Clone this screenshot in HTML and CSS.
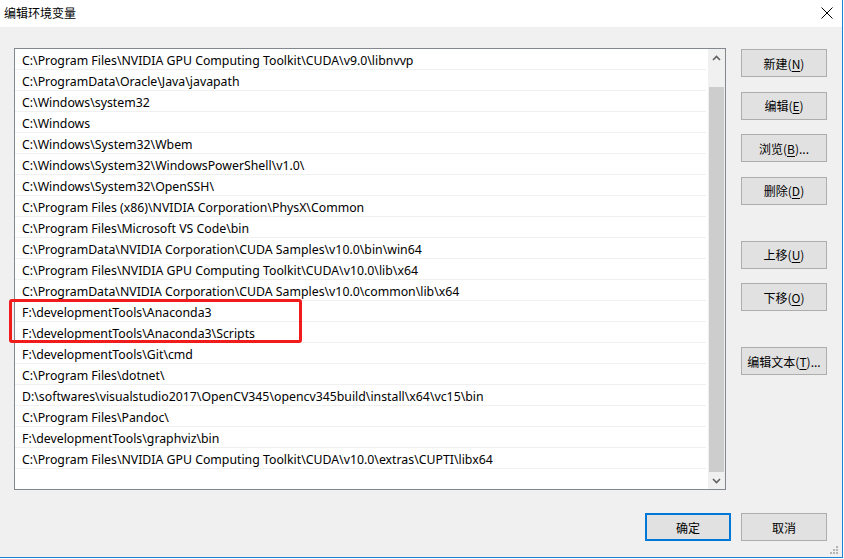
FILE: index.html
```html
<!DOCTYPE html>
<html lang="zh-CN">
<head>
<meta charset="utf-8">
<title>编辑环境变量</title>
<link rel="stylesheet" href="styles.css">
</head>
<body>
<div class="window">
  <div class="titlebar">
    <span class="title">编辑环境变量</span>
    <svg class="close" width="12" height="12" viewBox="0 0 12 12"><path d="M0.5 0.5 L11.5 11.5 M11.5 0.5 L0.5 11.5" stroke="#000" stroke-width="1" fill="none"/></svg>
  </div>
  <div class="content">
    <div class="main">
      <div class="listbox">
        <ul class="rows">
          <li>C:\Program Files\NVIDIA GPU Computing Toolkit\CUDA\v9.0\libnvvp</li>
          <li>C:\ProgramData\Oracle\Java\javapath</li>
          <li>C:\Windows\system32</li>
          <li>C:\Windows</li>
          <li>C:\Windows\System32\Wbem</li>
          <li>C:\Windows\System32\WindowsPowerShell\v1.0\</li>
          <li>C:\Windows\System32\OpenSSH\</li>
          <li>C:\Program Files (x86)\NVIDIA Corporation\PhysX\Common</li>
          <li>C:\Program Files\Microsoft VS Code\bin</li>
          <li>C:\ProgramData\NVIDIA Corporation\CUDA Samples\v10.0\bin\win64</li>
          <li>C:\Program Files\NVIDIA GPU Computing Toolkit\CUDA\v10.0\lib\x64</li>
          <li>C:\ProgramData\NVIDIA Corporation\CUDA Samples\v10.0\common\lib\x64</li>
          <li>F:\developmentTools\Anaconda3</li>
          <li>F:\developmentTools\Anaconda3\Scripts</li>
          <li>F:\developmentTools\Git\cmd</li>
          <li>C:\Program Files\dotnet\</li>
          <li>D:\softwares\visualstudio2017\OpenCV345\opencv345build\install\x64\vc15\bin</li>
          <li>C:\Program Files\Pandoc\</li>
          <li>F:\developmentTools\graphviz\bin</li>
          <li>C:\Program Files\NVIDIA GPU Computing Toolkit\CUDA\v10.0\extras\CUPTI\libx64</li>
        </ul>
        <div class="scrollbar">
          <div class="arrow">
            <svg width="9" height="6" viewBox="0 0 9 6"><path d="M1 5 L4.5 1.5 L8 5" stroke="#606060" stroke-width="1.6" fill="none"/></svg>
          </div>
          <div class="track"><div class="thumb"></div></div>
          <div class="arrow">
            <svg width="9" height="6" viewBox="0 0 9 6"><path d="M1 1 L4.5 4.5 L8 1" stroke="#606060" stroke-width="1.6" fill="none"/></svg>
          </div>
        </div>
      </div>
      <div class="side">
        <button class="btn">新建(<u>N</u>)</button>
        <button class="btn">编辑(<u>E</u>)</button>
        <button class="btn">浏览(<u>B</u>)...</button>
        <button class="btn">删除(<u>D</u>)</button>
        <button class="btn group">上移(<u>U</u>)</button>
        <button class="btn">下移(<u>O</u>)</button>
        <button class="btn group">编辑文本(<u>T</u>)...</button>
      </div>
    </div>
    <div class="footer">
      <button class="btn primary">确定</button>
      <button class="btn">取消</button>
    </div>
    <svg class="grip" width="9" height="9" viewBox="0 0 9 9">
      <g fill="#b4b4b4">
        <rect x="6" y="0" width="2" height="2"/>
        <rect x="3" y="3" width="2" height="2"/><rect x="6" y="3" width="2" height="2"/>
        <rect x="0" y="6" width="2" height="2"/><rect x="3" y="6" width="2" height="2"/><rect x="6" y="6" width="2" height="2"/>
      </g>
    </svg>
  </div>
  <div class="highlight"></div>
</div>
</body>
</html>
```

FILE: styles.css
```css
html, body {
  margin: 0;
  padding: 0;
  background: #ffffff;
}
body {
  width: 844px;
  height: 559px;
  overflow: hidden;
  font-family: "Segoe UI", "Noto Sans", "Noto Sans CJK SC", sans-serif;
  font-size: 12px;
  color: #000;
}
.window {
  position: relative;
  width: 843px;
  height: 558px;
  box-sizing: border-box;
  border-right: 1px solid #1883d7;
  border-bottom: 1px solid #1883d7;
  background: #f0f0f0;
  display: flex;
  flex-direction: column;
}
.titlebar {
  height: 27px;
  flex: none;
  background: #ffffff;
  display: flex;
  align-items: center;
  justify-content: space-between;
  padding: 0 9px 0 4px;
}
.title {
  font-family: "Noto Sans CJK SC", sans-serif;
  font-size: 12px;
  line-height: 16px;
  margin-top: -2px;
}
.close {
  display: block;
  margin-top: -2px;
}
.content {
  position: relative;
  flex: 1;
  padding: 21px 15px 0 14px;
  display: flex;
  flex-direction: column;
}
.main {
  display: flex;
  gap: 15px;
  align-items: flex-start;
}
.listbox {
  width: 712px;
  height: 442px;
  box-sizing: border-box;
  border: 1px solid #828790;
  background: #ffffff;
  display: flex;
}
.rows {
  list-style: none;
  margin: 0;
  padding: 0;
  flex: 1;
  min-width: 0;
}
.rows li {
  height: 18px;
  padding-top: 2px;
  line-height: 20px;
  font-size: 12.3px;
  border-bottom: 1px solid #f0f0f0;
  padding-left: 7px;
  margin-right: 2px;
  white-space: nowrap;
  overflow: hidden;
}
.scrollbar {
  width: 17px;
  flex: none;
  background: #f0f0f0;
  display: flex;
  flex-direction: column;
}
.arrow {
  height: 17px;
  flex: none;
  display: flex;
  align-items: center;
  justify-content: center;
}
.arrow svg { display: block; }
.track {
  flex: 1;
  display: flex;
  flex-direction: column;
  justify-content: flex-end;
}
.thumb {
  height: 385px;
  margin: 0 1px;
  background: #cdcdcd;
}
.side {
  display: flex;
  flex-direction: column;
  gap: 14.5px;
  margin-top: 1px;
}
.btn {
  width: 86px;
  height: 28px;
  box-sizing: border-box;
  border: 1px solid #adadad;
  background: #e1e1e1;
  font-family: "Noto Sans CJK SC", sans-serif;
  font-size: 12px;
  color: #000;
  padding: 0;
  margin: 0;
}
.btn u {
  text-decoration-thickness: 1px;
  text-underline-offset: 2px;
}
.btn.group {
  margin-top: 21.5px;
}
.footer {
  display: flex;
  justify-content: flex-end;
  gap: 10px;
  margin-top: 23px;
}
.btn.primary {
  border: 2px solid #0078d7;
}
.grip {
  position: absolute;
  right: 3px;
  bottom: 2px;
}
.highlight {
  position: absolute;
  left: 9px;
  top: 299px;
  width: 293px;
  height: 44px;
  box-sizing: border-box;
  border: 3px solid #f21b1b;
  border-radius: 3px;
}
```
